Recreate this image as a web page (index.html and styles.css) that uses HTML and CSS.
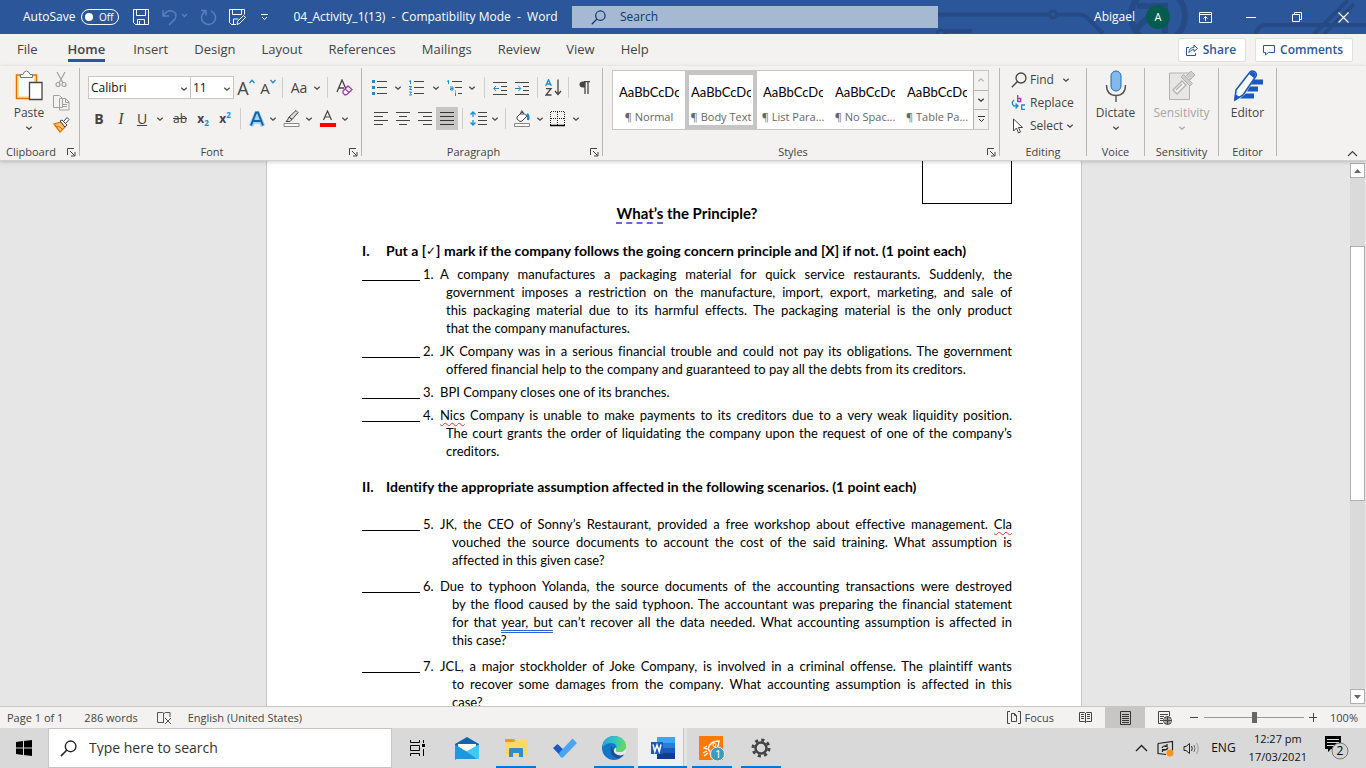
FILE: index.html
```html
<!DOCTYPE html>
<html lang="en">
<head>
<meta charset="utf-8">
<title>04_Activity_1(13) - Compatibility Mode - Word</title>
<link rel="stylesheet" href="styles.css">
</head>
<body>
<svg width="0" height="0" class="defs" aria-hidden="true">
  <symbol id="chev" viewBox="0 0 8 8"><path d="M1.3 2.8 4 5.3 6.7 2.8" fill="none" stroke="currentColor" stroke-width="1.2"/></symbol>
  <symbol id="launch" viewBox="0 0 9 9"><path d="M.5 7V.5H7M3 3l4.5 4.5M8 4v4H4" fill="none" stroke="#444" stroke-width="1"/></symbol>
  <symbol id="lens" viewBox="0 0 16 16"><circle cx="10" cy="6" r="5" fill="none" stroke="currentColor" stroke-width="1.3"/><path d="M6.500 9.500.8 15.200" stroke="currentColor" stroke-width="1.4"/></symbol>
</svg>

<header class="titlebar">
  <svg class="circuit" width="430" height="34" viewBox="0 0 430 34" fill="none" stroke="#264b84" stroke-width="4" aria-hidden="true">
    <path d="M0 14.500H112M122 14.500h20q6 0 10 4l15 15"/><circle cx="117" cy="14.500" r="3.500" stroke-width="3"/>
    <circle cx="222" cy="16" r="27" stroke-width="6"/><path d="M201 6h28v27M224 6l-26 25" stroke-width="6"/>
    <path d="M319 34q5-9 9-9h102M378 34l34-34M388 34l30-30" /><path d="M10 34v-3h26M-2 34v-3h-8" /><circle cx="5" cy="34" r="4" stroke-width="3"/>
  </svg>
  <div class="quick">
    <label class="autosave">AutoSave <button class="toggle" aria-label="AutoSave off"><i></i>Off</button></label>
    <button aria-label="Save"><svg width="17" height="17" viewBox="0 0 17 17" fill="none" stroke="#fff"><path d="M.5.500h15v15h-13l-2-2zM3.500.500v6h9v-6M4.500 15.500v-5h7v5M6.500 12v3.500"/></svg></button>
    <button aria-label="Undo"><svg width="26" height="18" viewBox="0 0 26 18" fill="none" stroke="#5780bd" stroke-width="1.500"><path d="M1 2v6h6M1 8q4-6 9-5 6 2 3 8l-6 6M20 6l2.500 2.500L25 6"/></svg></button>
    <button aria-label="Repeat"><svg width="17" height="17" viewBox="0 0 17 17" fill="none" stroke="#5780bd" stroke-width="1.500"><path d="M1 1.500h5v5M11 2a7 7 0 1 1-6 .5"/></svg></button>
    <button aria-label="Save as"><svg width="17" height="17" viewBox="0 0 17 17" fill="none" stroke="#fff"><path d="M7 15.500H2.500l-2-2V.500h15v5M3.500.500v5h9v-5M4.500 15v-5h5M8 15.500l.5-3 6-6 2 2-6 6z"/></svg></button>
    <button class="custom" aria-label="Customize toolbar"><svg width="9" height="9" viewBox="0 0 9 9" fill="none" stroke="#fff"><path d="M1 1.500h7M2 4l2.500 2.500L7 4"/></svg></button>
    <h1 class="doc-name">04_Activity_1(13)&nbsp; -&nbsp; Compatibility Mode&nbsp; -&nbsp; Word</h1>
  </div>
  <label class="search"><svg width="15" height="15"><use href="#lens"/></svg><input type="text" placeholder="Search" aria-label="Search"></label>
  <div class="account">
    <span>Abigael</span><span class="avatar">A</span>
    <button aria-label="Ribbon display options"><svg width="13" height="11" viewBox="0 0 13 11" fill="none" stroke="#fff"><path d="M.5.500h12v10H.500zM.500 2.500h12M6.500 9V4.500M4.500 6.500l2-2 2 2"/></svg></button>
    <button aria-label="Minimize"><svg width="10" height="10"><path d="M0 5.500h10" stroke="#fff"/></svg></button>
    <button aria-label="Restore"><svg width="10" height="10" fill="none" stroke="#fff"><path d="M.5 2.500h7v7h-7zM2.500 2V.500h7v7H8"/></svg></button>
    <button aria-label="Close"><svg width="11" height="11" stroke="#fff" stroke-width="1.200"><path d="m.5.500 10 10m0-10-10 10"/></svg></button>
  </div>
</header>

<nav class="tabs">
  <a href="#">File</a><a href="#" class="active">Home</a><a href="#">Insert</a><a href="#">Design</a><a href="#">Layout</a><a href="#">References</a><a href="#">Mailings</a><a href="#">Review</a><a href="#">View</a><a href="#">Help</a>
  <div class="actions">
    <button><svg width="12" height="12" viewBox="0 0 12 12" fill="none" stroke="#2b579a"><path d="M3 3.500H.500v8h9V9M3 8.500q0-5 5-5V1l3.500 3.500L8 7.500V5.500Q5 5.500 3 8.500z"/></svg>Share</button>
    <button><svg width="12" height="12" viewBox="0 0 12 12" fill="none" stroke="#2b579a"><path d="M.5 1.500h11v7h-6l-3 2.500V8.500h-2z"/></svg>Comments</button>
  </div>
</nav>

<section class="ribbon">
  <div class="group clipboard">
    <div class="content">
      <button class="big"><svg width="28" height="32" viewBox="0 0 28 32" fill="none"><path d="M1.500 5h20v23.500h-20z" fill="#fbe3ae" stroke="#e27100" stroke-width="1.500"/><path d="M4 7h15v19H4z" fill="#fafafa"/><path d="M5.500 7.500V4.500H8q1-3.500 3.500-3.500T15 4.500h2.500v3z" fill="#fff" stroke="#777"/><path d="M14.500 12.500h12.500v17H14.500z" fill="#fff" stroke="#444" stroke-width="1.300"/></svg><span>Paste</span><svg width="8" height="8"><use href="#chev"/></svg></button>
      <div class="stack">
        <button aria-label="Cut"><svg width="12" height="17" viewBox="0 0 12 17" fill="none" stroke="#a0a0a0" stroke-width="1.200"><path d="m2 1 6 11M10 1 4 12"/><circle cx="3" cy="13.500" r="2"/><circle cx="9" cy="13.500" r="2"/></svg></button>
        <button aria-label="Copy"><svg width="17" height="17" viewBox="0 0 17 17" fill="#f3f2f1" stroke="#a0a0a0"><path d="M.5 1.500h6l3 3v9h-9zM6.500 4.500h6l3.500 3.500v8H6.500zM12.500 4.500v4H16M9 10.500h5M9 12.500h5"/></svg></button>
        <button aria-label="Format painter"><svg width="17" height="16" viewBox="0 0 17 16" fill="none"><path d="m1 7 7-2 4 5-5 5z" fill="#ffc169" stroke="#e27100" stroke-width="1.300"/><path d="m2 9 5 1 3 3" stroke="#e27100"/><path d="m7 4 2-1 5 5-2 2zM11 4l3-3.500 2 2L13 6" stroke="#444" fill="#fff"/></svg></button>
      </div>
    </div>
    <h2>Clipboard</h2><button class="launch" aria-label="Clipboard settings"><svg width="9" height="9"><use href="#launch"/></svg></button>
  </div>

  <div class="group font">
    <div class="content rows">
      <div class="row">
        <span class="combo family"><select aria-label="Font"><option>Calibri</option></select><svg width="8" height="8"><use href="#chev"/></svg></span><span class="combo size"><select aria-label="Font size"><option>11</option></select><svg width="8" height="8"><use href="#chev"/></svg></span>
        <button class="w24" aria-label="Grow font"><span class="t18">A</span><svg class="mark" width="6" height="5" viewBox="0 0 6 5"><path d="M.5 4 3 1.300 5.500 4" fill="none" stroke="#2088d0" stroke-width="1.300"/></svg></button>
        <button class="w20" aria-label="Shrink font"><span class="t15">A</span><svg class="mark" width="6" height="5" viewBox="0 0 6 5"><path d="M.5 1 3 3.700 5.500 1" fill="none" stroke="#2088d0" stroke-width="1.300"/></svg></button>
        <i class="sep"></i>
        <button class="w24 t14" aria-label="Change case">Aa</button><button class="w12" aria-label="Case options"><svg width="8" height="8"><use href="#chev"/></svg></button>
        <i class="sep"></i>
        <button class="w24" aria-label="Clear formatting"><svg width="17" height="17" viewBox="0 0 17 17" fill="none" stroke="#444" stroke-width="1.300"><path d="m1 13 5-12 4 9M3 9h5"/><path d="m7 12 5-5 4 3.500-5 5-2 .5-2-2zM9 10l4 3.500" fill="#fff" stroke="#a437ab"/></svg></button>
      </div>
      <div class="row">
        <button class="w22 t14"><b>B</b></button><button class="w22 serif"><em>I</em></button><button class="w20 t14"><u>U</u></button><button class="w16" aria-label="Underline options"><svg width="8" height="8"><use href="#chev"/></svg></button>
        <button class="w24"><s>ab</s></button><button class="w22"><b>x<sub>2</sub></b></button><button class="w22"><b>x<sup>2</sup></b></button>
        <i class="sep"></i>
        <button class="w24" aria-label="Text effects"><svg width="16" height="16" viewBox="0 0 16 16" fill="none"><path d="M2 15 8 1l6 14M4.500 10.500h7" stroke="#9bd0f5" stroke-width="4.500"/><path d="M2 14.500 7 1.500h2l5 13M4.500 10h7" stroke="#1664a8" stroke-width="2"/></svg></button><button class="w8" aria-label="Effects options"><svg width="8" height="8"><use href="#chev"/></svg></button>
        <button class="w28" aria-label="Highlight"><svg width="17" height="17" viewBox="0 0 17 17" fill="none" stroke="#444"><path d="m6 7 7-6.500 2 2L9 9.500zM6 7l-1.500 3L3 11.500h4L9 9.500z" fill="#ddd"/><path d="M1 13.500h15v3H1z" fill="#fff" stroke="#888"/></svg></button><button class="w8" aria-label="Highlight options"><svg width="8" height="8"><use href="#chev"/></svg></button>
        <button class="w28" aria-label="Font color"><svg width="17" height="17" viewBox="0 0 17 17"><path d="m4.500 10 4-9 4 9M6 7h5" fill="none" stroke="#444" stroke-width="1.200"/><path d="M1 13h16v4H1z" fill="#f00"/></svg></button><button class="w8" aria-label="Color options"><svg width="8" height="8"><use href="#chev"/></svg></button>
      </div>
    </div>
    <h2>Font</h2><button class="launch" aria-label="Font settings"><svg width="9" height="9"><use href="#launch"/></svg></button>
  </div>

  <div class="group paragraph">
    <div class="content rows">
      <div class="row">
        <button class="w20" aria-label="Bullets"><svg width="16" height="16"><path d="M0 0h3v3H0zM0 6h3v3H0zM0 12h3v3H0z" fill="#2088d0"/><path d="M5 1.500h10M5 7.500h10M5 13.500h10" stroke="#444"/></svg></button><button class="w16" aria-label="Bullet options"><svg width="8" height="8"><use href="#chev"/></svg></button>
        <button class="w22" aria-label="Numbering"><svg width="16" height="16"><path d="M0 1.500 1.500.500V4M0 6.500h2.500L.500 9.500H3M0 12h2.500l-1 1.500 1 1.500H0" fill="none" stroke="#2088d0"/><path d="M5 1.500h10M5 7.500h10M5 13.500h10" stroke="#444"/></svg></button><button class="w16" aria-label="Numbering options"><svg width="8" height="8"><use href="#chev"/></svg></button>
        <button class="w22" aria-label="Multilevel list"><svg width="16" height="16"><path d="M0 1.500 1.500.500V4M3 7h3v3H3.500V8.500H6M8.500 12.500V16M8.500 10.500v1" fill="none" stroke="#2088d0"/><path d="M5 1.500h10M8 7.500h7M11 13.500h4" stroke="#444"/></svg></button><button class="w12" aria-label="Multilevel options"><svg width="8" height="8"><use href="#chev"/></svg></button>
        <i class="sep wide"></i>
        <button class="w22" aria-label="Decrease indent"><svg width="15" height="14" fill="none" stroke="#444"><path d="M0 1.500h14M8 5.500h6M8 9.500h6M0 13.500h14"/><path d="M6 7.500H1M3 5 .700 7.500 3 10" stroke="#2088d0"/></svg></button><button class="w22" aria-label="Increase indent"><svg width="15" height="14" fill="none" stroke="#444"><path d="M0 1.500h14M8 5.500h6M8 9.500h6M0 13.500h14"/><path d="M0 7.500h5.500M3.500 5l2.300 2.500L3.500 10" stroke="#2088d0"/></svg></button>
        <i class="sep"></i>
        <button class="w22" aria-label="Sort"><svg width="17" height="17" fill="none" stroke-width="1.300"><path d="M.7 7 3.500.700 6.300 7M1.500 5h4" stroke="#2088d0"/><path d="M1 9.700h5L1 16h5.500M13 .500v15M10 12l3 3.500 3-3.500" stroke="#444"/></svg></button>
        <i class="sep"></i>
        <button class="w22" aria-label="Show marks"><svg width="11" height="14"><path d="M5 .700h6M6 .500V13M9 .500V13" stroke="#444" stroke-width="1.300"/><path d="M6 .500H4q-3.500 0-3.500 3T4 6.500h2z" fill="#444"/></svg></button>
      </div>
      <div class="row">
        <button class="w22" aria-label="Align left"><svg width="14" height="13" stroke="#444"><path d="M0 .500h14M0 4.500h9M0 8.500h14M0 12.500h9"/></svg></button><button class="w22" aria-label="Center"><svg width="14" height="13" stroke="#444"><path d="M0 .500h14M3 4.500h8M0 8.500h14M3 12.500h8"/></svg></button><button class="w22" aria-label="Align right"><svg width="14" height="13" stroke="#444"><path d="M0 .500h14M5 4.500h9M0 8.500h14M5 12.500h9"/></svg></button><button class="w22 on" aria-label="Justify"><svg width="14" height="13" stroke="#333"><path d="M0 .500h14M0 4.500h14M0 8.500h14M0 12.500h14"/></svg></button>
        <i class="sep"></i>
        <button class="w22" aria-label="Line spacing"><svg width="17" height="15" fill="none"><path d="M3 1v5M3 9v5M.500 3.500 3 1l2.500 2.500M.500 11.500 3 14l2.500-2.500" stroke="#2088d0" stroke-width="1.300"/><path d="M8 1.500h9M8 5.500h9M8 9.500h9M8 13.500h9" stroke="#444"/></svg></button><button class="w12" aria-label="Spacing options"><svg width="8" height="8"><use href="#chev"/></svg></button>
        <i class="sep"></i>
        <button class="w24" aria-label="Shading"><svg width="17" height="17" viewBox="0 0 17 17" fill="none"><path d="m3 7 5-5 5 4-5 5-2 .5L3 9zM7 5V1.500Q8-.500 9 2v3" stroke="#444" fill="#fff"/><path d="M13 4q2 2 1 6" stroke="#2088d0" stroke-width="2.500"/><path d="M.5 13.500h15v3H.500z" fill="#fff" stroke="#888"/></svg></button><button class="w12" aria-label="Shading options"><svg width="8" height="8"><use href="#chev"/></svg></button>
        <button class="w24" aria-label="Borders"><svg width="16" height="16" fill="none" stroke="#222"><path d="M.5 14V.500h14V14M7.500 1v13M1 7.500h14" stroke-dasharray="1 1"/><path d="M0 14.500h15" stroke="#000" stroke-width="1.500"/></svg></button><button class="w12" aria-label="Border options"><svg width="8" height="8"><use href="#chev"/></svg></button>
      </div>
    </div>
    <h2>Paragraph</h2><button class="launch" aria-label="Paragraph settings"><svg width="9" height="9"><use href="#launch"/></svg></button>
  </div>

  <div class="group styles">
    <div class="content">
      <div class="gallery">
        <button><span>AaBbCcDc</span><small>¶ Normal</small></button><button class="sel"><span>AaBbCcDc</span><small>¶ Body Text</small></button><button><span>AaBbCcDc</span><small>¶ List Para...</small></button><button><span>AaBbCcDc</span><small>¶ No Spac...</small></button><button><span>AaBbCcDc</span><small>¶ Table Pa...</small></button>
        <div class="pager"><button aria-label="Previous styles" disabled><svg class="flip" width="8" height="8"><use href="#chev"/></svg></button><button aria-label="Next styles"><svg width="8" height="8"><use href="#chev"/></svg></button><button aria-label="More styles"><svg width="9" height="9" viewBox="0 0 9 9" fill="none" stroke="#333"><path d="M1 1.500h7M2 4l2.500 2.500L7 4"/></svg></button></div>
      </div>
    </div>
    <h2>Styles</h2><button class="launch" aria-label="Styles settings"><svg width="9" height="9"><use href="#launch"/></svg></button>
  </div>

  <div class="group editing">
    <div class="content list">
      <button><svg width="16" height="16"><use href="#lens"/></svg>Find<svg class="far" width="8" height="8"><use href="#chev"/></svg></button>
      <button><svg width="16" height="16" viewBox="0 0 16 16" fill="none" stroke-width="1.300"><path d="M6.700 0v7M6.700 6.500h3v-3h-3" stroke="#a437ab"/><path d="M14 10h-3.300v4.300H14M3 5q-3.500 3 0 6h3.500M4.500 8.500 7 11l-2.500 2.500" stroke="#2088d0"/></svg>Replace</button>
      <button><svg width="16" height="16" viewBox="0 0 16 16"><path d="M2.500 1v12l3-3 2 5 2-1-2-4.500h4z" fill="#fff" stroke="#444"/></svg>Select<svg width="8" height="8"><use href="#chev"/></svg></button>
    </div>
    <h2>Editing</h2>
  </div>

  <div class="group voice"><div class="content"><button class="big"><svg width="22" height="32" viewBox="0 0 22 32" fill="none"><rect x="6" y="1" width="10" height="20" rx="5" fill="#83b9ec" stroke="#1c6fb5"/><path d="M1.500 15q0 10.500 9.500 10.500T20.500 15M11 25.500V32" stroke="#555" stroke-width="1.400"/></svg><span>Dictate</span><svg width="8" height="8"><use href="#chev"/></svg></button></div><h2>Voice</h2></div>

  <div class="group sens"><div class="content"><button class="big" disabled><svg width="28" height="32" viewBox="0 0 28 32" fill="none" stroke="#b4b2b0"><path d="M1.500 3h20v26.500h-20z" fill="#e8e6e5"/><path d="m5 20 9-9 4 4-9 9zM8 20l6-6" fill="#f3f2f1" stroke-width="1.300"/><path d="m13 7 2.500-2.500 9 9L22 16zM18 6l5-5 4 4-5 5" fill="#d0cecd"/></svg><span>Sensitivity</span><svg width="8" height="8"><use href="#chev"/></svg></button></div><h2>Sensitivity</h2></div>

  <div class="group editor"><div class="content"><button class="big"><svg width="32" height="32" viewBox="0 0 32 32"><path d="M22 9.500h9v5H19zM18 16.500h8v5H15zM14 23.500h8v5H8z" fill="#185abd"/><path d="M4 20 18 2q2-2 5 0 2 2 1 4L11 25l-8 5z" fill="#fff" stroke="#185abd" stroke-width="1.600"/><path d="m17 4 3-3 4 3-2 4zM3 24l5 3-6 4z" fill="#185abd"/></svg><span>Editor</span></button></div><h2>Editor</h2></div>
  <button class="collapse" aria-label="Collapse ribbon"><svg width="11" height="7"><path d="m1 6 4.500-4.500L10 6" fill="none" stroke="#444" stroke-width="1.200"/></svg></button>
</section>

<main class="workspace">
  <div class="canvas">
    <article class="page">
      <div class="score-box"></div>
      <h2 class="doc-title"><span class="hint">What’s</span> the Principle?</h2>
      <h3 class="part"><span>I.</span>Put a [<span class="tick">✓</span>] mark if the company follows the going concern principle and [X] if not. (1 point each)</h3>
      <div class="item">
        <p class="first"><i class="blank"></i><span>1.</span><span class="line">A company manufactures a packaging material for quick service restaurants. Suddenly, the</span></p>
        <p class="line">government imposes a restriction on the manufacture, import, export, marketing, and sale of</p>
        <p class="line">this packaging material due to its harmful effects. The packaging material is the only product</p>
        <p>that the company manufactures.</p>
      </div>
      <div class="item">
        <p class="first"><i class="blank"></i><span>2.</span><span class="line">JK Company was in a serious financial trouble and could not pay its obligations. The government</span></p>
        <p>offered financial help to the company and guaranteed to pay all the debts from its creditors.</p>
      </div>
      <div class="item">
        <p class="first"><i class="blank"></i><span>3.</span><span>BPI Company closes one of its branches.</span></p>
      </div>
      <div class="item">
        <p class="first"><i class="blank"></i><span>4.</span><span class="line"><span class="typo">Nics</span> Company is unable to make payments to its creditors due to a very weak liquidity position.</span></p>
        <p class="line">The court grants the order of liquidating the company upon the request of one of the company’s</p>
        <p>creditors.</p>
      </div>
      <h3 class="part second"><span>II.</span>Identify the appropriate assumption affected in the following scenarios. (1 point each)</h3>
      <div class="item deep">
        <p class="first"><i class="blank"></i><span>5.</span><span class="line">JK, the CEO of Sonny’s Restaurant, provided a free workshop about effective management. <span class="typo">Cla</span></span></p>
        <p class="line">vouched the source documents to account the cost of the said training. What assumption is</p>
        <p>affected in this given case?</p>
      </div>
      <div class="item deep">
        <p class="first"><i class="blank"></i><span>6.</span><span class="line">Due to typhoon Yolanda, the source documents of the accounting transactions were destroyed</span></p>
        <p class="line">by the flood caused by the said typhoon. The accountant was preparing the financial statement</p>
        <p class="line">for that <span class="grammar">year, but</span> can’t recover all the data needed. What accounting assumption is affected in</p>
        <p>this case?</p>
      </div>
      <div class="item deep">
        <p class="first"><i class="blank"></i><span>7.</span><span class="line">JCL, a major stockholder of Joke Company, is involved in a criminal offense. The plaintiff wants</span></p>
        <p class="line">to recover some damages from the company. What accounting assumption is affected in this</p>
        <p>case?</p>
      </div>
    </article>
  </div>
  <div class="scrollbar">
    <button aria-label="Scroll up"><svg width="7" height="4"><path d="M0 4 3.500 0 7 4z" fill="#666"/></svg></button>
    <div class="track"><div class="thumb"></div></div>
    <button aria-label="Scroll down"><svg width="7" height="4"><path d="M0 0h7L3.500 4z" fill="#666"/></svg></button>
  </div>
</main>

<footer class="status">
  <span>Page 1 of 1</span><span class="words">286 words</span>
  <button class="proof" aria-label="Proofing errors"><svg width="15" height="13" fill="none" stroke="#555"><path d="M6.500 11.500h-6v-10h5l1.500 1 1.500-1H13V6M6.500 2v10M8 7l6 6M14 7l-6 6"/></svg></button><span>English (United States)</span>
  <div class="views">
    <button class="focus"><svg width="14" height="13" fill="none" stroke="#444"><path d="M3 .500H.500v12H3M11 .500h2.500v12H11M4.500 2.500h3l2 2v6h-5zM7.500 2.500v2h2"/></svg>Focus</button>
    <button class="mode" aria-label="Read mode"><svg width="13" height="13" fill="none" stroke="#444"><path d="M.5 1.500h5l1 1 1-1h5v9h-5l-1 1-1-1h-5zM6.500 2v10M2 3.500h3M2 5.500h3M2 7.500h3M8 3.500h3M8 5.500h3M8 7.500h3"/></svg></button>
    <button class="mode on" aria-label="Print layout"><svg width="11" height="14" fill="none" stroke="#333"><path d="M.5.500h10v13H.500zM2 3.500h7M2 5.500h7M2 7.500h7M2 9.500h7M2 11.500h7"/></svg></button>
    <button class="mode" aria-label="Web layout"><svg width="14" height="14" fill="none" stroke="#444"><path d="M5 12.500H.500V.500h11V5M2 3.500h8M2 5.500h4M2 7.500h3M2 9.500h3"/><circle cx="9.500" cy="9.500" r="4" fill="#f3f2f1"/><path d="M5.500 9.500h8M9.500 5.500v8M8 6v7M11 6v7"/></svg></button>
    <button class="minus" aria-label="Zoom out"><svg width="9" height="9"><path d="M0 4.500h8" stroke="#444"/></svg></button>
    <input type="range" min="0" max="100" value="50" aria-label="Zoom">
    <button aria-label="Zoom in"><svg width="9" height="9"><path d="M0 4.500h8M4.500 0v9" stroke="#444"/></svg></button>
    <span class="pct">100%</span>
  </div>
</footer>

<nav class="taskbar">
  <button class="start" aria-label="Start"><svg width="16" height="16"><path d="m0 2 7-1v6.500H0zM8 .900 16 0v7.500H8zM0 8.500h7V15l-7-1zM8 8.500h8V16l-8-1z"/></svg></button>
  <label class="find"><svg width="17" height="17"><use href="#lens"/></svg><input type="text" placeholder="Type here to search" aria-label="Type here to search"></label>
  <div class="apps">
    <button aria-label="Task view"><svg width="17" height="16" fill="none" stroke="#000"><path d="M1.500 0v2.500h9V0M1.500 5.500h9v5h-9zM1.500 16v-2.500h9V16M14.500 0v3M14.500 9v7"/><path d="M13 4h3v3h-3z" fill="#000" stroke="none"/></svg></button>
    <button aria-label="Mail"><svg width="24" height="24" viewBox="0 0 24 24"><path d="M0 8 12 1l12 7v3H0z" fill="#1066ae"/><path d="M3 8h18v9H3z" fill="#fff"/><path d="M0 8.500 12 16 0 24z" fill="#1687d4"/><path d="M24 8.500V23H0L12 15z" fill="#3dc8f5"/><path d="M0 23V9l12 7 10 7z" fill="#1b98df"/></svg></button>
    <button class="run" aria-label="File Explorer"><svg width="22" height="20" viewBox="0 0 22 20"><path d="M0 1h9l2 2v3H0z" fill="#e8a013"/><path d="M0 4h9l2-2h11v16H0z" fill="#ffd868"/><path d="M4 11q0-1 1-1h12q1 0 1 1v8h-4v-4H8v4H4z" fill="#318bd2"/></svg></button>
    <button aria-label="To Do"><svg width="24" height="20" viewBox="0 0 24 20"><path d="m0 10 4.500-4 9 8.500-4.500 5z" fill="#185abd"/><path d="m6.500 14.500 13-14L24 5 10.500 19q-1.500 1-3 0l-1.500-2z" fill="#4aa4f2"/></svg></button>
    <button class="run" aria-label="Edge"><svg width="24" height="24" viewBox="0 0 24 24">
      <defs><linearGradient id="wave" x1="0" y1="0" x2="1" y2="0"><stop offset="0" stop-color="#2aa5dc"/><stop offset=".55" stop-color="#34c5c0"/><stop offset="1" stop-color="#6bdd55"/></linearGradient></defs>
      <circle cx="12" cy="12" r="12" fill="#1376c8"/><path d="M1 8Q4 0 12 0q11 0 12 10 0 6-7 6-4 0-2.500-3Q15 7 9 7 4 7 1 11z" fill="url(#wave)"/><path d="M9.500 10q-3 9 5 12 5 0 8-5-3 2-7 1-5-1-5-6z" fill="#174f91"/><path d="M14.500 13q-1.500 3 2.500 3 6 0 7-5v5l-1 2q-5 3-10-.5-2.500-3 .5-6z" fill="#e8e8e8"/><path d="M24 11q-1 5-7 5-4 0-2.500-3l.5-2z" fill="#5bd86a"/></svg></button>
    <button class="run current" aria-label="Word"><svg width="24" height="22" viewBox="0 0 24 22"><path d="M6 0h18v6H6z" fill="#41a5ee"/><path d="M6 6h18v5H6z" fill="#2b7cd3"/><path d="M6 11h18v5H6z" fill="#185abd"/><path d="M6 16h18v6H6z" fill="#103f91"/><path d="M0 5h12v12H0z" fill="#185abd"/><path d="m2 7.500 1.800 7L6 8l2.200 6.500 1.800-7" fill="none" stroke="#fff" stroke-width="1.500"/></svg></button>
    <button class="run" aria-label="Launcher"><svg width="26" height="26" viewBox="0 0 26 26" fill="none"><path d="M0 1h24v24H0z" fill="#ff7a00"/><path d="M9 14q2-8 11-8 0 8-8 12zM8 11l-3 2 3 1M14 18l-2 3-1-3M4 18l4-2M5 21l4-3" stroke="#fff" stroke-width="1.300"/><circle cx="15.500" cy="10" r="1.500" stroke="#fff"/><circle cx="18.500" cy="19" r="7" fill="#3d9bbd" stroke="#dfeef4"/><text x="16" y="23" font-size="11" fill="#fff">1</text></svg></button>
    <button class="run" aria-label="Settings"><svg width="20" height="20" viewBox="0 0 20 20" fill="none" stroke="#444"><circle cx="10" cy="10" r="5.500" stroke-width="2.500"/><circle cx="10" cy="10" r="8" stroke-width="3" stroke-dasharray="3.140 3.140"/></svg></button>
  </div>
  <div class="tray">
    <button aria-label="Hidden icons"><svg width="13" height="8" fill="none" stroke="#222" stroke-width="1.400"><path d="m1 7 5.500-5.500L12 7"/></svg></button>
    <button aria-label="Updates"><svg width="17" height="17" viewBox="0 0 17 17" fill="none" stroke="#222" stroke-width="1.200"><path d="M1 3.500 15.500 1.500v9M9 14.500 1 13.500v-10M5 8q1-3 5-2M10 4v2.500H7.500M11 7.500q-1 3-5 2.500M5.500 12V9.500H8"/><circle cx="13" cy="13" r="3.500" fill="#f7931e" stroke="none"/></svg></button>
    <button aria-label="Volume"><svg width="17" height="15" viewBox="0 0 17 15" fill="none" stroke="#222"><path d="M1 5.500h2l3.500-3v10l-3.500-3H1zM8.500 5q1.500 2.500 0 5"/><path d="M11 4q2 3.500 0 7" stroke="#666"/><path d="M13.500 2q3.500 5.500 0 11" stroke="#999"/></svg></button>
    <span class="lang">ENG</span>
    <time>12:27 pm<br>17/03/2021</time>
    <button class="notes" aria-label="Notifications"><svg width="26" height="26" viewBox="0 0 26 26"><path d="M1 1h16v13H7l-3 3v-3H1z"/><path d="M3 4.500h12M3 7.500h12M3 10.500h8" stroke="#ddd"/><circle cx="16" cy="16" r="8" fill="#d4d3d4" stroke="#777"/><text x="12.500" y="20" font-size="12">2</text></svg></button>
  </div>
</nav>
</body>
</html>
```
FILE: styles.css
```css
* { box-sizing: border-box; }
body { margin: 0; height: 100vh; display: flex; flex-direction: column; overflow: hidden; font: 12px/16px "Open Sans", "Noto Sans", sans-serif; color: #444; }
button { margin: 0; padding: 0; border: 0; background: none; font: inherit; color: inherit; display: flex; align-items: center; justify-content: center; flex: none; }
svg { flex: none; display: block; }
.defs { position: absolute; }
h1, h2, h3, p { margin: 0; font-weight: 400; font-size: inherit; }
input { font: inherit; color: inherit; min-width: 0; }
a { color: inherit; text-decoration: none; }

.titlebar { flex: none; height: 34px; display: grid; grid-template-columns: 572fr 366fr 428fr; align-items: center; background: #2b579a; color: #fff; position: relative; }
.circuit { position: absolute; right: 0; top: 0; }
.quick { display: flex; align-items: center; gap: 12px; padding-left: 23px; white-space: nowrap; }
.autosave { display: flex; align-items: center; gap: 6px; margin-right: 2px; }
.toggle { width: 38px; height: 16px; border: 1px solid #fff; border-radius: 8px; font-size: 10px; justify-content: space-between; padding: 0 5px 0 3px; }
.toggle i { width: 8px; height: 8px; border-radius: 50%; background: #fff; }
.custom { margin-left: 2px; }
.doc-name { margin-left: 12px; }
.search { display: flex; align-items: center; gap: 14px; height: 22px; padding-left: 19px; background: #a5b9d3; color: #0f3571; position: relative; }
.search input, .find input { border: 0; background: none; outline: 0; padding: 0; flex: 1; }
.search input::placeholder { color: #0f3571; opacity: 1; }
.account { position: relative; display: flex; align-items: center; justify-content: flex-end; height: 34px; }
.account button { width: 46px; height: 34px; }
.avatar { width: 24px; height: 24px; margin: 0 12px 0 11px; border-radius: 50%; background: #035c4d; font-size: 11px; line-height: 24px; text-align: center; }

.tabs { flex: none; height: 32px; display: flex; align-items: stretch; background: #f3f2f1; padding: 0 13px 0 4px; }
.tabs a { padding: 7px 13px 0; font-size: 13px; }
.tabs .active { font-weight: 600; margin: 0 2px 0 4px; position: relative; }
.tabs .active::after { content: ""; position: absolute; left: 13px; right: 13px; bottom: 4px; height: 3px; background: #2b579a; }
.actions { margin-left: auto; display: flex; align-items: center; gap: 9px; }
.actions button { height: 24px; padding: 0 9px 0 7px; gap: 5px; background: #fff; border: 1px solid #e1dfdd; border-radius: 2px; color: #2b579a; font-weight: 600; }

.ribbon { flex: none; height: 95px; display: flex; background: #f3f2f1; border-bottom: 1px solid #d0d0d0; position: relative; z-index: 1; box-shadow: 0 1px 4px #0003; }
.group { position: relative; flex: none; margin: 2px 0 4px; border-right: 1px solid #b8b6b4; display: flex; flex-direction: column; }
.group h2 { font-size: 11px; line-height: 16px; text-align: center; margin-bottom: -4px; }
.content { flex: 1; display: flex; align-items: flex-start; }
.launch { position: absolute; right: 3px; bottom: -1px; }
.clipboard { width: 80px; }
.font { width: 282px; padding-left: 8px; }
.paragraph { width: 241px; padding-left: 8px; }
.styles { width: 397px; padding-left: 9px; }
.font h2, .paragraph h2, .styles h2 { margin-left: -8px; }
.clipboard h2, .font h2, .paragraph h2, .styles h2 { padding-right: 17px; }
.editing { width: 87px; }
.voice { width: 58px; }
.sens { width: 74px; }
.editor { width: 58px; }
.rows { flex-direction: column; gap: 8px; padding-top: 8px; }
.row { display: flex; align-items: center; height: 23px; }
.row button { height: 23px; }
.sep { width: 1px; height: 21px; margin: 0 4px; background: #d0cecc; flex: none; }
.wide { margin-left: 6px; }
.w8 { width: 8px; } .w12 { width: 12px; } .w16 { width: 16px; } .w20 { width: 20px; } .w22 { width: 22px; } .w24 { width: 24px; } .w28 { width: 28px; }
.t14 { font-size: 14px; } .t15 { font-size: 15px; } .t18 { font-size: 18px; }
.serif { font-family: "Liberation Serif", serif; font-size: 16px; }
.mark { align-self: flex-start; margin-top: 3px; }
.row sub, .row sup { font-size: 8px; line-height: 0; color: #2088d0; }
.on { background: #c8c6c4; }
.combo { position: relative; display: block; height: 23px; background: #fff; border: 1px solid #c8c6c4; }
.combo select { width: 100%; height: 21px; border: 0; padding: 0 2px; background: none; appearance: none; font: inherit; color: #111; }
.combo svg { position: absolute; right: 2px; top: 8px; }
.family { width: 103px; } .size { width: 43px; border-left: 0; }
.big { flex-direction: column; width: 100%; height: 66px; justify-content: flex-start; padding-top: 2px; }
.big span { line-height: 18px; margin: 2px 0; }
.big:disabled { color: #a8a6a4; }
.clipboard .big { width: 58px; }
.stack { display: flex; flex-direction: column; align-items: center; gap: 6px; width: 6px; padding-top: 3px; }

.gallery { display: flex; width: 377px; height: 60px; margin-top: 2px; background: #fff; border: 1px solid #c8c6c4; }
.gallery > button { width: 72px; height: 58px; flex-direction: column; gap: 9px; padding: 8px 2px 0; border: 4px solid transparent; white-space: nowrap; }
.gallery > .sel { border-color: #c5c5c5; }
.gallery span { width: 60px; overflow: hidden; font-family: Lato, sans-serif; font-size: 13px; color: #000; }
.gallery small { font-size: 11px; color: #666; }
.pager { flex: 1; display: flex; flex-direction: column; border-left: 1px solid #b5b3b1; }
.pager button { flex: 1; background: #f3f2f1; color: #333; }
.pager button + button { border-top: 1px solid #b5b3b1; }
.pager button:disabled { color: #b5b3b1; }
.flip { transform: rotate(180deg); }
.list { flex-direction: column; padding: 0 0 0 11px; }
.list button { height: 23px; gap: 3px; }
.far { margin-left: 5px; }
.collapse { position: absolute; right: 8px; bottom: 3px; }

.workspace { flex: 1; min-height: 0; display: flex; background: #e6e6e6; padding-right: 1px; }
.canvas { flex: 1; display: flex; justify-content: center; align-items: flex-start; overflow: hidden; padding-right: 2px; }
.page { width: 816px; flex: none; min-height: 1056px; padding: 0 69px 0 95px; background: #fff; border: 1px solid #c6c6c6; border-width: 0 1px; color: #000; font: 13px/18px Lato, sans-serif; font-variant-ligatures: none; }
.score-box { width: 90px; height: 43px; margin-left: auto; border: 1px solid #000; border-top: 0; }
.doc-title { text-align: center; font-size: 15px; font-weight: 700; }
.hint { text-decoration: underline 2px dashed #7160e8; text-underline-offset: 3px; }
.part { display: flex; font-size: 14px; font-weight: 700; margin: 20px 0 5px; white-space: pre; }
.part > span:first-child { width: 24px; }
.tick { font-family: "DejaVu Sans", sans-serif; font-weight: 400; font-size: 12px; }
.second { margin: 18px 0 19px; }
.item { padding-left: 84px; margin-bottom: 5px; }
.deep, .part + .deep { padding-left: 90px; margin-bottom: 8px; }
.line { display: block; flex: 1; text-align: justify; text-align-last: justify; white-space: nowrap; }
.first { display: flex; gap: 3px; margin-left: -84px; }
.first span:nth-child(2) { min-width: 14px; }
.deep .first { margin-left: -90px; }
.blank { width: 58px; height: 16px; border-bottom: 1px solid #000; flex: none; }
.typo { text-decoration: underline wavy 1px #d13438; text-underline-offset: 2px; }
.grammar { border-bottom: 3px double #2b64d8; }
.scrollbar { width: 15px; flex: none; display: flex; flex-direction: column; padding: 2px 0; }
.scrollbar button { height: 15px; background: #fff; border: 1px solid #b0b0b0; }
.track { flex: 1; background: #dadada; display: flex; flex-direction: column; padding-top: 68px; }
.thumb { height: 255px; background: #fff; border: 1px solid #b0b0b0; }

.status { flex: none; height: 22px; display: flex; align-items: center; padding: 0 8px 0 7px; background: #f3f2f1; border-top: 1px solid #c8c6c4; font-size: 11px; }
.words { margin: 0 19px 0 21px; }
.proof { margin-right: 16px; }
.views { margin-left: auto; display: flex; align-items: center; height: 21px; }
.focus { gap: 3px; margin-right: 11px; }
.mode { width: 40px; height: 21px; }
.minus { margin-left: 5px; }
.views input { appearance: none; width: 100px; height: 12px; margin: 0 5px; background: linear-gradient(#999, #999) center / 100% 1px no-repeat; }
.views input::-webkit-slider-thumb { appearance: none; width: 5px; height: 11px; background: #666; }
.pct { margin-left: 12px; }

.taskbar { flex: none; height: 40px; display: flex; background: #dad9da; color: #111; }
.start { width: 48px; }
.find { width: 344px; display: flex; align-items: center; gap: 12px; padding-left: 11px; background: #fff; border: 1px solid #c6c6c6; font-size: 14px; color: #222; }
.find input::placeholder { color: #333; opacity: 1; }
.apps { display: flex; margin-left: 1px; }
.apps button { width: 49px; position: relative; }
.run::after { content: ""; position: absolute; left: 5px; right: 4px; bottom: 0; height: 2px; background: #0078d7; }
.apps .current { background: linear-gradient(90deg, #f0f0f0 45px, #c4c4c4 45px, #c4c4c4 46px, #e3e3e3 46px); }
.current::after { left: 0; right: 0; }
.tray { margin-left: auto; display: flex; align-items: center; gap: 9px; padding-right: 16px; }
.lang { margin: 0 4px 0 2px; }
.tray time { text-align: center; font-size: 11px; line-height: 18px; }
.notes { margin-left: 8px; }
```
